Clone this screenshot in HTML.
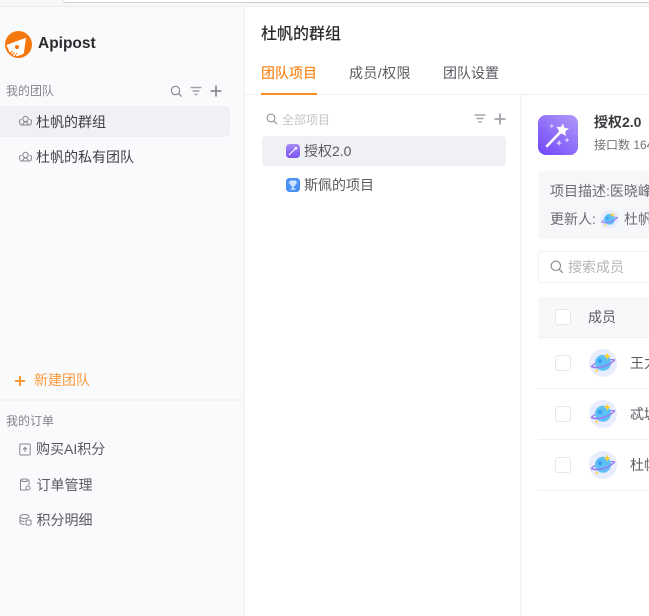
<!DOCTYPE html>
<html lang="zh">
<head>
<meta charset="utf-8">
<title>Apipost</title>
<style>
*{box-sizing:border-box;margin:0;padding:0}
html,body{width:649px;height:616px;overflow:hidden;background:#fff}
body{position:relative;font-family:"Liberation Sans","Noto Sans CJK SC",sans-serif;color:#555}
.a{position:absolute;white-space:nowrap}
svg{position:absolute;display:block}
.t14{font-size:14px;line-height:20px;color:#4d4d52}
.t12{font-size:12px;line-height:18px;color:#85858c}
.cb{position:absolute;left:555px;width:16px;height:16px;border:1px solid #e6e6e9;border-radius:3px;background:#fff}
.line{position:absolute;left:538px;width:111px;height:1px;background:#f0f0f2}
</style>
</head>
<body>
<!-- top chrome -->
<div class="a" style="left:0;top:0;width:649px;height:7px;background:#f7f7f7"></div>
<div class="a" style="left:63px;top:0;width:586px;height:3px;background:#fff;border-bottom:1px solid #cfcfcf;border-left:1px solid #ddd;border-bottom-left-radius:4px"></div>
<div class="a" style="left:0;top:6px;width:649px;height:1px;background:#ececee"></div>

<!-- sidebar -->
<div class="a" style="left:0;top:7px;width:244px;height:609px;background:#f9fafc"></div>
<div class="a" style="left:244px;top:7px;width:1px;height:609px;background:#f0f0f3"></div>

<!-- logo -->
<svg style="left:5px;top:31px" width="27" height="27" viewBox="0 0 27 27">
<circle cx="13.5" cy="13.5" r="13.500" fill="#f5780f"/>
<path d="M1.500 14 L21 6.700 L18.800 22.500 Q14 25.500 9 25 L4.500 21z" fill="#fff"/>
<circle cx="12" cy="16" r="2" fill="#f5780f"/>
<path d="M7 24.500l2.500-3.500M9.500 25.500l2.500-3.500M4.800 23l2.500-3" stroke="#f5780f" stroke-width="1" fill="none"/>
</svg>
<div class="a" style="left:38px;top:34px;font-size:15.500px;line-height:20px;font-weight:700;color:#2b2b2e">Apipost</div>

<div class="a t12" style="left:6px;top:82px">我的团队</div>
<svg style="left:170px;top:85px" width="13" height="13" viewBox="0 0 13 13"><circle cx="5.500" cy="5.500" r="4.200" fill="none" stroke="#85858c" stroke-width="1.100"/><path d="M8.600 8.600l3 3" stroke="#85858c" stroke-width="1.200"/></svg>
<svg style="left:190px;top:86px" width="12" height="10" viewBox="0 0 12 10"><path d="M.5 1.500h11M2.500 5h7M4.500 8.500h3" stroke="#a3a3aa" stroke-width="1.500"/></svg>
<svg style="left:210px;top:85px" width="12" height="12" viewBox="0 0 12 12"><path d="M6 .5v11M.5 6h11" stroke="#8e8e95" stroke-width="1.800"/></svg>

<div class="a" style="left:0;top:106px;width:230px;height:31px;background:#eff1f5;border-radius:0 4px 4px 0"></div>
<svg style="left:19px;top:115px" width="13" height="12" viewBox="0 0 13 12" fill="none" stroke="#85858c" stroke-width="1"><circle cx="6.500" cy="4" r="2.700"/><path d="M2.500 4.500a2 2 0 0 0-1.800 3.200c.2 1.300 1 2.300 1.800 2.300h8c1 0 1.700-1 1.800-2.300a2 2 0 0 0-1.800-3.200"/><path d="M4 10c0-2 1.200-3 2.500-3S9 8 9 10"/></svg>
<div class="a t14" style="left:36px;top:112px;color:#3f3f44">杜帆的群组</div>
<svg style="left:19px;top:151px" width="13" height="12" viewBox="0 0 13 12" fill="none" stroke="#85858c" stroke-width="1"><circle cx="6.500" cy="4" r="2.700"/><path d="M2.500 4.500a2 2 0 0 0-1.800 3.200c.2 1.300 1 2.300 1.800 2.300h8c1 0 1.700-1 1.800-2.300a2 2 0 0 0-1.800-3.200"/><path d="M4 10c0-2 1.200-3 2.500-3S9 8 9 10"/></svg>
<div class="a t14" style="left:36px;top:147px;color:#3f3f44">杜帆的私有团队</div>

<svg style="left:14px;top:375px" width="12" height="12" viewBox="0 0 12 12"><path d="M6 1v10M1 6h10" stroke="#fa9a32" stroke-width="2"/></svg>
<div class="a" style="left:34px;top:370px;font-size:14px;line-height:20px;color:#fa9a3e">新建团队</div>
<div class="a" style="left:0;top:399px;width:244px;height:2px;background:#f2f3f5"></div>
<div class="a t12" style="left:6px;top:412px">我的订单</div>

<svg style="left:19px;top:443px" width="12" height="13" viewBox="0 0 12 13" fill="none" stroke="#85858c" stroke-width="1"><rect x=".8" y="1" width="10.400" height="11" rx="1.200"/><path d="M6 9V4.500M4 6.500l2-2 2 2"/></svg>
<div class="a t14" style="left:36px;top:439px;color:#5a5a60">购买AI积分</div>
<svg style="left:19px;top:478px" width="12" height="13" viewBox="0 0 12 13" fill="none" stroke="#85858c" stroke-width="1"><path d="M3 2H1.500v10h6M8.500 2H10v5"/><rect x="3" y="1" width="5" height="2.500" rx=".8"/><circle cx="9" cy="10" r="2"/></svg>
<div class="a t14" style="left:36.500px;top:475px;color:#5a5a60">订单管理</div>
<svg style="left:19px;top:514px" width="13" height="12" viewBox="0 0 13 12" fill="none" stroke="#85858c" stroke-width="1"><ellipse cx="5.500" cy="2.500" rx="4.500" ry="2"/><path d="M1 2.500v6c0 1.200 2 2 4.500 2M1 5.500c0 1.200 2 2 4.500 2"/><rect x="7" y="6" width="5" height="5" rx="1"/></svg>
<div class="a t14" style="left:36.500px;top:510px;color:#5a5a60">积分明细</div>

<!-- header -->
<div class="a" style="left:261px;top:24px;font-size:16px;line-height:21px;font-weight:500;color:#2b2b2e">杜帆的群组</div>
<div class="a" style="left:261px;top:63px;font-size:14px;line-height:20px;color:#f98c22;font-weight:500">团队项目</div>
<div class="a t14" style="left:349px;top:63px;color:#5a5a60;letter-spacing:.4px">成员/权限</div>
<div class="a t14" style="left:443px;top:63px;color:#5a5a60">团队设置</div>
<div class="a" style="left:245px;top:94px;width:404px;height:1px;background:#f0f0f2"></div>
<div class="a" style="left:261px;top:93px;width:56px;height:2px;background:#f98c22"></div>

<!-- middle column -->
<div class="a" style="left:520px;top:95px;width:2px;height:521px;background:#f5f5f7"></div>
<svg style="left:266px;top:113px" width="12" height="12" viewBox="0 0 12 12"><circle cx="5" cy="5" r="3.900" fill="none" stroke="#8c8c93" stroke-width="1"/><path d="M8 8l3 3" stroke="#8c8c93" stroke-width="1.100"/></svg>
<div class="a" style="left:282px;top:111px;font-size:12px;line-height:18px;color:#c4c4c9">全部项目</div>
<svg style="left:474px;top:114px" width="12" height="10" viewBox="0 0 12 10"><path d="M.5 1h11M2.500 4.500h7M4.500 8h3" stroke="#a3a3aa" stroke-width="1.500"/></svg>
<svg style="left:494px;top:113px" width="12" height="12" viewBox="0 0 12 12"><path d="M6 .5v11M.5 6h11" stroke="#a3a3aa" stroke-width="1.800"/></svg>

<div class="a" style="left:262px;top:136px;width:244px;height:30px;background:#eff1f5;border-radius:4px"></div>
<svg style="left:286px;top:144px" width="14" height="14" viewBox="0 0 14 14"><defs><linearGradient id="g1" x1="0" y1="0" x2="0" y2="1"><stop offset="0" stop-color="#a58bf7"/><stop offset="1" stop-color="#7a55f5"/></linearGradient></defs><rect width="14" height="14" rx="3.500" fill="url(#g1)"/><path d="M3 11l6-6" stroke="#fff" stroke-width="1.100"/><circle cx="9.800" cy="4.300" r="1.300" fill="#fff"/></svg>
<div class="a t14" style="left:304px;top:141px;color:#5a5a60">授权2.0</div>
<svg style="left:286px;top:178px" width="14" height="14" viewBox="0 0 14 14"><rect width="14" height="14" rx="3.500" fill="#4a90f5"/><path d="M4 2.500h6v3a3 3 0 0 1-6 0z" fill="#cfe4ff"/><path d="M2.500 3.500H4v2.500a1.500 1.500 0 0 1-1.500-1.500zM11.500 3.500H10v2.500a1.500 1.500 0 0 0 1.500-1.500z" fill="#9cc6fb"/><path d="M6.200 8.500h1.600v2H9.500v1.200h-5v-1.200h1.700z" fill="#cfe4ff"/></svg>
<div class="a t14" style="left:304px;top:175px;color:#5a5a60">斯佩的项目</div>

<!-- right -->
<svg style="left:538px;top:115px" width="40" height="40" viewBox="0 0 40 40"><defs><linearGradient id="g2" x1=".9" y1="0" x2=".1" y2="1"><stop offset="0" stop-color="#ad98f8"/><stop offset="1" stop-color="#7448fb"/></linearGradient></defs><rect width="40" height="40" rx="8" fill="url(#g2)"/><path d="M9 31L23 16.500" stroke="#fff" stroke-width="2.600" stroke-linecap="round"/><path d="M25 8.500l1.300 4.200 4.500.8-3.500 3 .4 4.500-3.800-2.500-4.300 1.300 1.400-4.300-2.600-3.600 4.600 0z" fill="#fff"/><path d="M13.700 8l.9 2.100 2.100.9-2.100.9-.9 2.100-.9-2.100-2.100-.9 2.100-.9z" fill="#c9bcfb"/><path d="M21 25l.9 2.100 2.100.9-2.100.9-.9 2.100-.9-2.100-2.100-.9 2.100-.9z" fill="#e0dafd"/><path d="M29 22.500l.8 1.700 1.700.8-1.700.8-.8 1.700-.8-1.700-1.700-.8 1.700-.8z" fill="#e0dafd"/></svg>
<div class="a" style="left:594px;top:112px;font-size:14px;line-height:20px;font-weight:700;color:#3a3a3f">授权2.0</div>
<div class="a t12" style="left:594px;top:136px;color:#717178">接口数 164</div>

<div class="a" style="left:538px;top:171px;width:111px;height:68px;background:#f6f7f9;border-radius:4px 0 0 4px"></div>
<div class="a" style="left:550px;top:181px;font-size:14px;line-height:20px;color:#6b6b72">项目描述:医晓峰</div>
<div class="a" style="left:550px;top:209px;font-size:14px;line-height:20px;color:#6b6b72">更新人:</div>
<svg style="left:600px;top:210px" width="19" height="19" viewBox="0 0 28 28"><use href="#planet"/></svg>
<div class="a" style="left:624px;top:209px;font-size:14px;line-height:20px;color:#6b6b72">杜帆</div>

<div class="a" style="left:538px;top:251px;width:120px;height:32px;border:1px solid #f0f0f2;border-radius:4px;background:#fff"></div>
<svg style="left:550px;top:260px" width="14" height="14" viewBox="0 0 14 14"><circle cx="5.800" cy="5.800" r="4.700" fill="none" stroke="#85858c" stroke-width="1.100"/><path d="M9.300 9.300l3.500 3.500" stroke="#85858c" stroke-width="1.200"/></svg>
<div class="a" style="left:568px;top:257px;font-size:14px;line-height:20px;color:#b5b5ba">搜索成员</div>

<div class="a" style="left:538px;top:297px;width:111px;height:41px;background:#f7f8fa;border-radius:4px 0 0 0"></div>
<div class="line" style="top:337px"></div>
<div class="cb" style="top:309px"></div>
<div class="a t14" style="left:588px;top:307px;color:#5a5a60">成员</div>

<svg width="0" height="0" style="position:absolute"><defs><g id="planet"><circle cx="14" cy="14" r="14" fill="#e8edfd"/><path d="M2.500 17.500C4 15.500 6 14.500 8 14M25.500 11C24 10.500 22.500 10.500 21 10.700" fill="none" stroke="#9b7bf0" stroke-width="1.200"/><circle cx="14" cy="13.700" r="8" fill="#5cc0f5"/><circle cx="11" cy="12" r="2.200" fill="#3d9def"/><path d="M2.500 17.500C8 20.500 20 17 25.500 11" fill="none" stroke="#9b7bf0" stroke-width="1.600" stroke-linecap="round"/><path d="M18.300 3.500l1.100 2.600 2.600 1.100-2.600 1.100-1.100 2.600-1.100-2.600-2.600-1.100 2.600-1.100z" fill="#fbd23a"/><path d="M7.700 19.700l.6 1.500 1.500.6-1.500.6-.6 1.500-.6-1.500-1.500-.6 1.500-.6z" fill="#fbd23a"/></g></defs></svg>

<div class="cb" style="top:355px"></div>
<svg style="left:589px;top:349px" width="28" height="28" viewBox="0 0 28 28"><use href="#planet"/></svg>
<div class="a t14" style="left:630px;top:353px;color:#5a5a60">王力</div>
<div class="line" style="top:388px"></div>

<div class="cb" style="top:406px"></div>
<svg style="left:589px;top:400px" width="28" height="28" viewBox="0 0 28 28"><use href="#planet"/></svg>
<div class="a t14" style="left:630px;top:404px;color:#5a5a60">忒城</div>
<div class="line" style="top:439px"></div>

<div class="cb" style="top:457px"></div>
<svg style="left:589px;top:451px" width="28" height="28" viewBox="0 0 28 28"><use href="#planet"/></svg>
<div class="a t14" style="left:630px;top:455px;color:#5a5a60">杜帆</div>
<div class="line" style="top:490px"></div>
</body>
</html>
